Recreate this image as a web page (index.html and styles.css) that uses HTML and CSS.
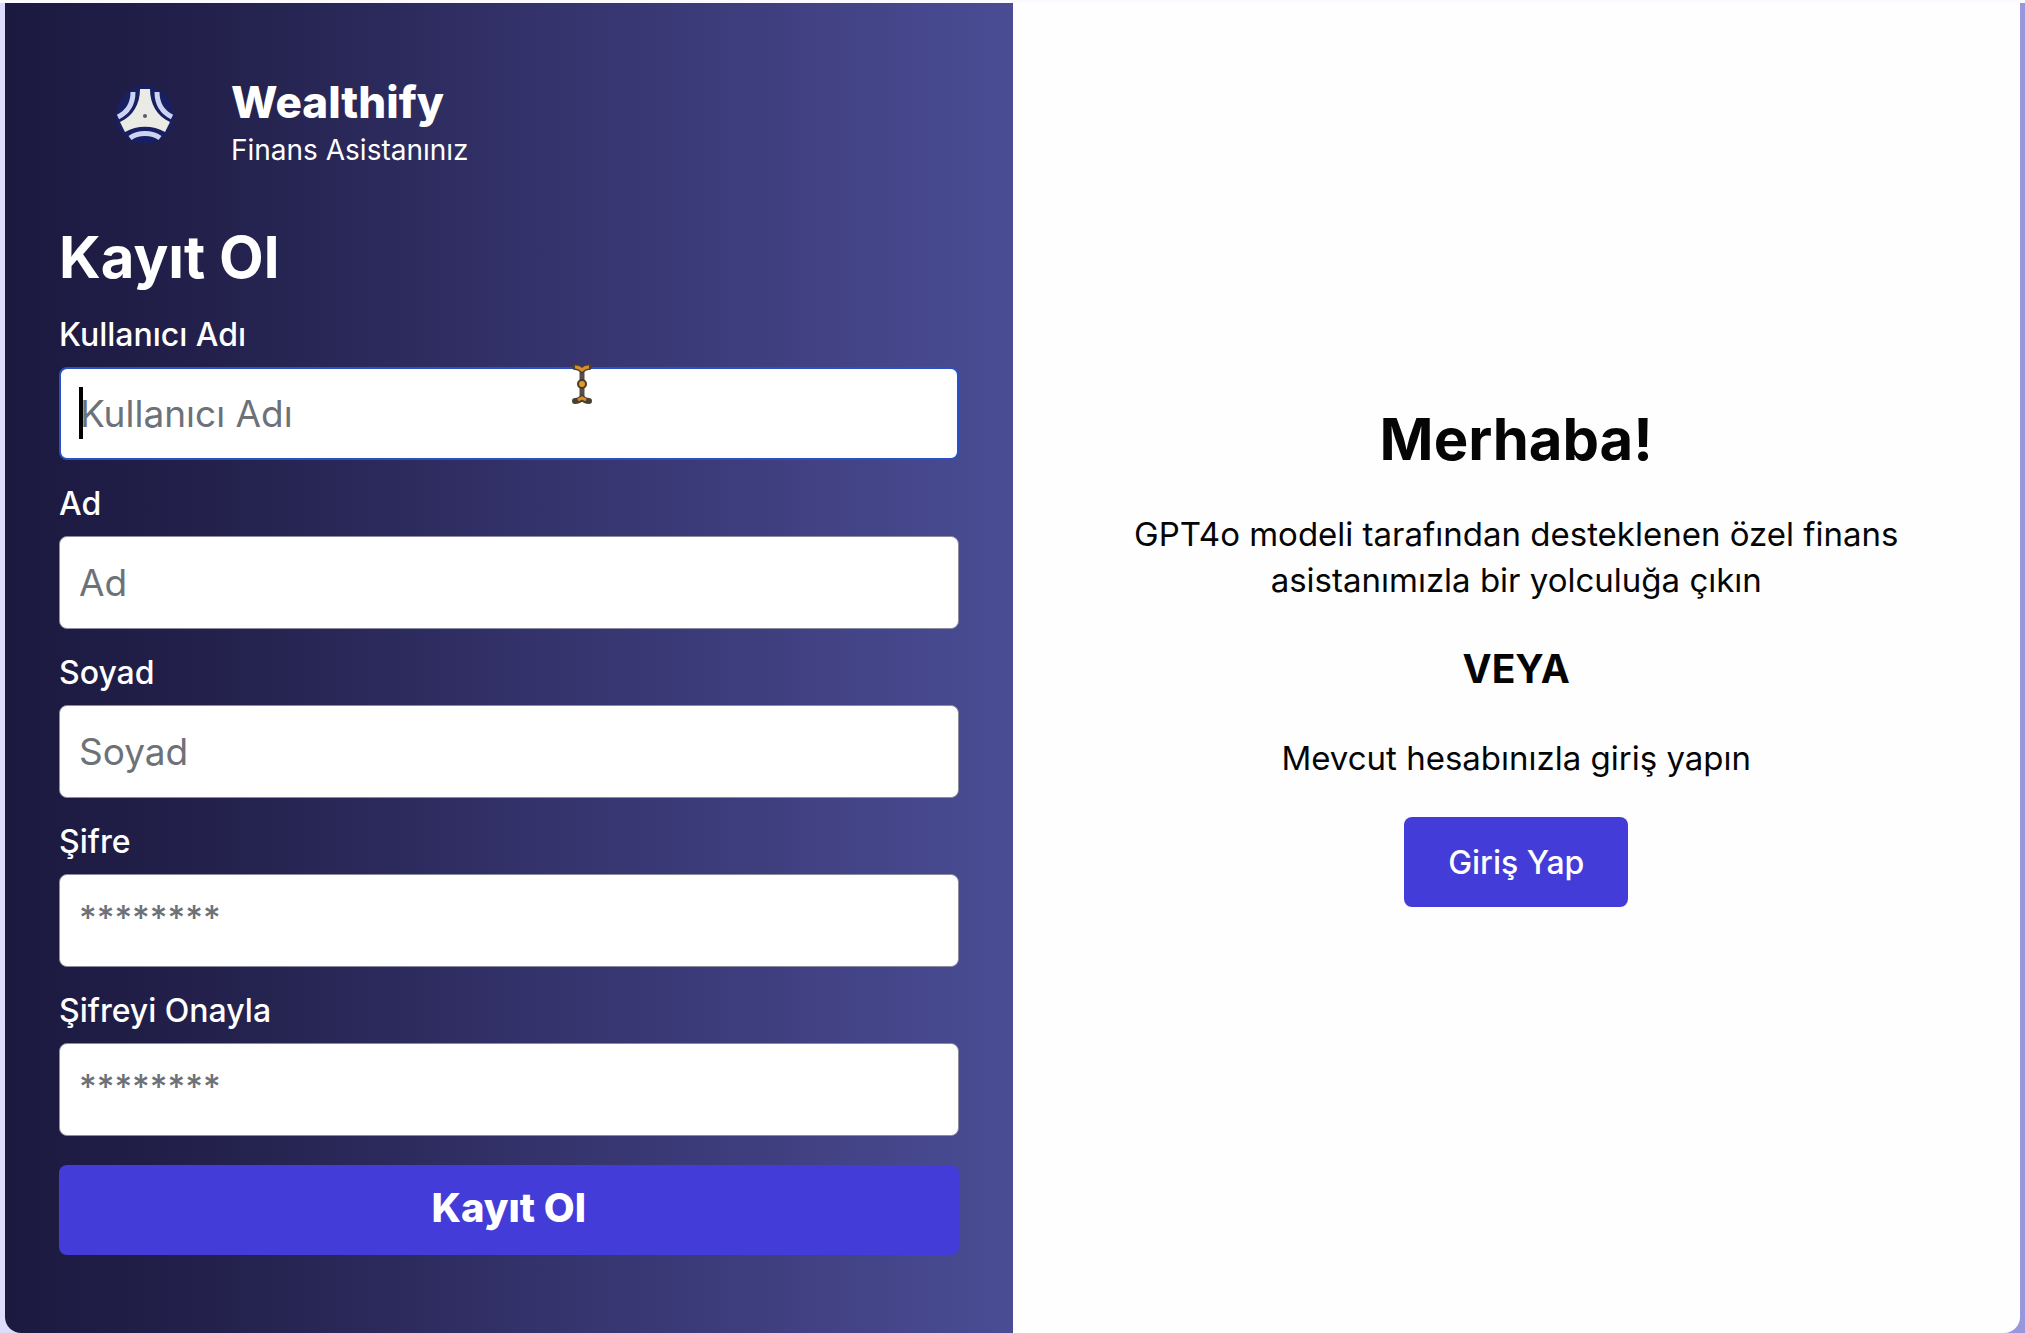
FILE: index.html
```html
<!DOCTYPE html>
<html lang="tr">
<head>
  <meta charset="utf-8">
  <meta name="viewport" content="width=device-width, initial-scale=1">
  <title>Wealthify – Kayıt Ol</title>
  <link rel="stylesheet" href="styles.css">
</head>
<body>
  <main class="auth">
    <section class="signup">
      <header class="brand">
        <div class="brand-mark">
          <svg class="brand-logo" viewBox="0 0 60 60" aria-hidden="true">
            <circle cx="30" cy="30" r="29" fill="#182061"/>
            <path fill="#e9ebe4" d="M25 4H35C35 19 42 31 55 37L50 47C38 40 22 40 10 47L5 37C18 31 25 19 25 4Z"/>
            <g fill="none" stroke="#cdd3f3" stroke-width="5">
              <path d="M18 7C18 18 13 27 3 32"/>
              <path d="M42 7C42 18 47 27 57 32"/>
              <path d="M15 53C23 47 37 47 45 53"/>
            </g>
            <circle cx="30" cy="31" r="2" fill="#5b5d62"/>
          </svg>
        </div>
        <div>
          <p class="brand-name">Wealthify</p>
          <p class="brand-tagline">Finans Asistanınız</p>
        </div>
      </header>

      <h1 class="title">Kayıt Ol</h1>

      <form class="form">
        <div class="field">
          <label class="label" for="username">Kullanıcı Adı</label>
          <div class="control">
            <input class="input input-active" id="username" type="text" placeholder="Kullanıcı Adı">
            <span class="caret"></span>
            <svg class="pointer" viewBox="0 0 20 40" aria-hidden="true">
              <path d="M10 5V35" stroke="#55504c" stroke-width="5"/>
              <path d="M3 3C6 3 8 4 10 6C12 4 14 3 17 3M3 37C6 37 8 36 10 34C12 36 14 37 17 37" fill="none" stroke="#4a4034" stroke-width="6" stroke-linecap="round"/>
              <path d="M3 3C6 3 8 4 10 6C12 4 14 3 17 3M6 36L10 34L14 36" fill="none" stroke="#d9902a" stroke-width="3"/>
              <circle cx="10" cy="20" r="4" fill="#e09a2c" stroke="#4a3a22" stroke-width="2"/>
            </svg>
          </div>
        </div>
        <div class="field">
          <label class="label" for="first-name">Ad</label>
          <input class="input" id="first-name" type="text" placeholder="Ad">
        </div>
        <div class="field">
          <label class="label" for="last-name">Soyad</label>
          <input class="input" id="last-name" type="text" placeholder="Soyad">
        </div>
        <div class="field">
          <label class="label" for="password">Şifre</label>
          <input class="input input-password" id="password" type="password" placeholder="********">
        </div>
        <div class="field">
          <label class="label" for="confirm">Şifreyi Onayla</label>
          <input class="input input-password" id="confirm" type="password" placeholder="********">
        </div>
        <button class="submit" type="submit">Kayıt Ol</button>
      </form>
    </section>

    <section class="welcome">
      <h2 class="welcome-title">Merhaba!</h2>
      <p class="text">GPT4o modeli tarafından desteklenen özel finans asistanımızla bir yolculuğa çıkın</p>
      <p class="or">VEYA</p>
      <p class="text">Mevcut hesabınızla giriş yapın</p>
      <button class="login" type="button">Giriş Yap</button>
    </section>
  </main>
</body>
</html>
```
FILE: styles.css
```css
* {
  box-sizing: border-box;
}

body {
  margin: 0;
  min-height: 100vh;
  display: flex;
  padding: 0 5px;
  border-top: 3px solid #fbfbff;
  background: linear-gradient(90deg, #dddcfc, #9997dc);
  font-family: Inter, "Liberation Sans", sans-serif;
  color: #050505;
}

h1,
h2,
p {
  margin: 0;
}

.auth {
  flex: 1;
  display: grid;
  grid-template-columns: 1fr 1fr;
  border-radius: 0 0 16px 16px;
  overflow: hidden;
  background: #fefefe;
}

.signup {
  padding: 73px 54px 77px;
  background: linear-gradient(90deg, #1b193f, #25234f 25%, #33326a 52%, #434387 84%, #4a4d94);
  color: #fff;
}

.brand {
  display: flex;
  align-items: flex-start;
}

.brand-mark {
  width: 172px;
  padding-top: 9px;
  display: flex;
  justify-content: center;
}

.brand-logo {
  width: 60px;
  height: 60px;
}

.brand-name {
  font-size: 44px;
  line-height: 52px;
  font-weight: 800;
}

.brand-tagline {
  font-size: 28px;
  line-height: 44px;
}

.title {
  margin: 45px 0 14px;
  font-size: 58px;
  line-height: 80px;
  font-weight: 700;
}

.form {
  display: flex;
  flex-direction: column;
  gap: 20px;
}

.field {
  display: flex;
  flex-direction: column;
  gap: 8px;
}

.label {
  font-size: 32px;
  line-height: 48px;
  font-weight: 500;
}

.control {
  position: relative;
}

.input {
  display: block;
  width: 100%;
  height: 93px;
  padding: 0 19px;
  border: 1px solid #8b8ba0;
  border-radius: 8px;
  background: #fff;
  color: #111;
  font: inherit;
  font-size: 37px;
}

.input::placeholder {
  color: #6d7178;
  opacity: 1;
}

.input-password {
  padding-bottom: 6px;
  font-size: 34px;
  font-weight: 500;
}

.input-active {
  border: 2px solid #2b50c4;
}

.caret {
  position: absolute;
  top: 20px;
  left: 20px;
  width: 4px;
  height: 52px;
  background: #000;
}

.pointer {
  position: absolute;
  top: -3px;
  left: 57%;
  width: 20px;
  height: 40px;
}

.submit,
.login {
  height: 90px;
  border: 0;
  border-radius: 8px;
  background: #443cd8;
  color: #fff;
  font: inherit;
}

.submit {
  margin-top: 9px;
  padding-bottom: 6px;
  font-size: 40px;
  font-weight: 800;
}

.welcome {
  display: flex;
  flex-direction: column;
  align-items: center;
  justify-content: center;
  padding: 0 100px 30px;
  text-align: center;
}

.welcome-title {
  margin-bottom: 32px;
  font-size: 58px;
  line-height: 80px;
  font-weight: 700;
}

.text {
  font-size: 33px;
  line-height: 46px;
}

.or {
  margin: 40px 0;
  font-size: 39px;
  line-height: 52px;
  font-weight: 700;
}

.login {
  margin-top: 36px;
  padding: 0 44px;
  font-size: 32px;
  font-weight: 500;
}
```
